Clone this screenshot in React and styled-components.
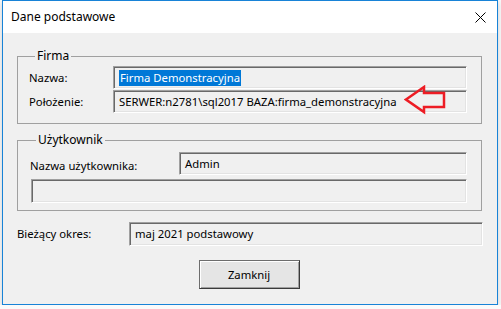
import React from "react";
import styled, { createGlobalStyle } from "styled-components";

const GlobalStyle = createGlobalStyle`
  html, body {
    margin: 0;
    padding: 0;
    background: #fafafa;
  }
  body {
    font-family: "Noto Sans", "Open Sans", "Liberation Sans", sans-serif;
    font-size: 11.3px;
    color: #000;
  }
`;

const Window = styled.div`
  box-sizing: border-box;
  width: 496px;
  height: 305px;
  margin-left: 2px;
  border: 1px solid #1883d7;
  background: #f0f0f0;
  box-shadow: 0 2px 6px rgba(0, 0, 0, 0.18);
  display: flex;
  flex-direction: column;
`;

const TitleBar = styled.div`
  height: 32px;
  background: #fff;
  display: flex;
  align-items: center;
  justify-content: space-between;
  padding: 0 8px 0 8px;
  flex-shrink: 0;
`;

const Title = styled.span`
  font-size: 12px;
  color: #000;
  margin-top: -2px;
`;

const CloseButton = styled.button`
  border: none;
  background: transparent;
  padding: 0;
  width: 16px;
  height: 16px;
  margin-right: 1px;
  display: flex;
  align-items: center;
  justify-content: center;
`;

const Body = styled.div`
  flex: 1;
  display: flex;
  flex-direction: column;
  padding: 15px 15px 0 14px;
`;

const GroupBox = styled.fieldset`
  box-sizing: border-box;
  height: ${({ $height }) => $height}px;
  margin: 0 0 ${({ $gap }) => $gap}px 0;
  padding: ${({ $pad }) => $pad};
  border: 1px solid #a0a0a0;
  min-width: 0;
  display: grid;
  grid-template-columns: ${({ $labelWidth }) => $labelWidth}px 1fr;
  row-gap: ${({ $rowGap }) => $rowGap}px;
  align-items: center;
  align-content: start;
`;

const Legend = styled.legend`
  margin-left: 6px;
  padding: 0 2px;
  line-height: 16px;
  font-size: 12px;
`;

const Label = styled.label`
  line-height: 16px;
  align-self: ${({ $lower }) => ($lower ? "start" : "center")};
  margin-top: ${({ $lower }) => ($lower ? "6px" : "0")};
`;

const Field = styled.div`
  position: relative;
  box-sizing: border-box;
  height: ${({ $h = 23 }) => $h}px;
  border-top: 1px solid #a0a0a0;
  border-left: 1px solid #a0a0a0;
  border-right: 1px solid #fff;
  border-bottom: 1px solid #fff;
  box-shadow: inset 1px 1px 0 #696969, inset -1px -1px 0 #e3e3e3;
  background: #f0f0f0;
  display: flex;
  align-items: ${({ $top }) => ($top ? "flex-start" : "center")};
  padding: ${({ $top }) => ($top ? "3px 5px 0" : "0 5px")};
  line-height: 16px;
  white-space: nowrap;
  grid-column: ${({ $full }) => ($full ? "1 / -1" : "auto")};
  margin-left: ${({ $offset = 0 }) => $offset}px;
`;

const Selected = styled.span`
  background: #0078d7;
  color: #fff;
  padding: 0 1px;
`;

const Arrow = styled.svg`
  position: absolute;
  right: 16px;
  top: -6px;
`;

const PeriodRow = styled.div`
  display: grid;
  grid-template-columns: 112px 1fr;
  align-items: center;
  margin: 11px -1px 14px 0;
`;

const Footer = styled.div`
  display: flex;
  justify-content: center;
  padding-right: 1px;
`;

const Button = styled.button`
  box-sizing: border-box;
  width: 101px;
  height: 29px;
  font-family: inherit;
  font-size: 11.3px;
  color: #000;
  background: #e5e5e5;
  border: 1px solid #6d6d6d;
  border-right-color: #3a3a3a;
  border-bottom-color: #3a3a3a;
  box-shadow: inset 1px 1px 0 #fff, inset -1px -1px 0 #a0a0a0;
  padding: 0;
`;

export default function App() {
  return (
    <>
      <GlobalStyle />
      <Window>
        <TitleBar>
          <Title>Dane podstawowe</Title>
          <CloseButton aria-label="Zamknij">
            <svg width="11" height="11" viewBox="0 0 11 11">
              <path d="M0.5 0.5 L10.5 10.5 M10.5 0.5 L0.5 10.5" stroke="#000" strokeWidth="1" />
            </svg>
          </CloseButton>
        </TitleBar>
        <Body>
          <GroupBox $height={76} $gap={8} $pad="2px 14px 0 11px" $labelWidth={84} $rowGap={1}>
            <Legend>Firma</Legend>
            <Label>Nazwa:</Label>
            <Field>
              <Selected>Firma Demonstracyjna</Selected>
            </Field>
            <Label>Położenie:</Label>
            <Field>
              SERWER:n2781\sql2017 BAZA:firma_demonstracyjna
              <Arrow width="46" height="32" viewBox="0 0 46 32">
                <polygon
                  points="2,14.5 20,2 20,8 40,8 40,22 20,22 20,27"
                  fill="none"
                  stroke="#ed1c24"
                  strokeWidth="2.5"
                  strokeLinejoin="miter"
                />
              </Arrow>
            </Field>
          </GroupBox>

          <GroupBox $height={79} $gap={0} $pad="4px 14px 0 12px" $labelWidth={149} $rowGap={4}>
            <Legend>Użytkownik</Legend>
            <Label $lower>Nazwa użytkownika:</Label>
            <Field $top>Admin</Field>
            <Field $full $offset={1} $h={24} />
          </GroupBox>

          <PeriodRow>
            <Label>Bieżący okres:</Label>
            <Field $h={24}>maj 2021 podstawowy</Field>
          </PeriodRow>

          <Footer>
            <Button>Zamknij</Button>
          </Footer>
        </Body>
      </Window>
    </>
  );
}
